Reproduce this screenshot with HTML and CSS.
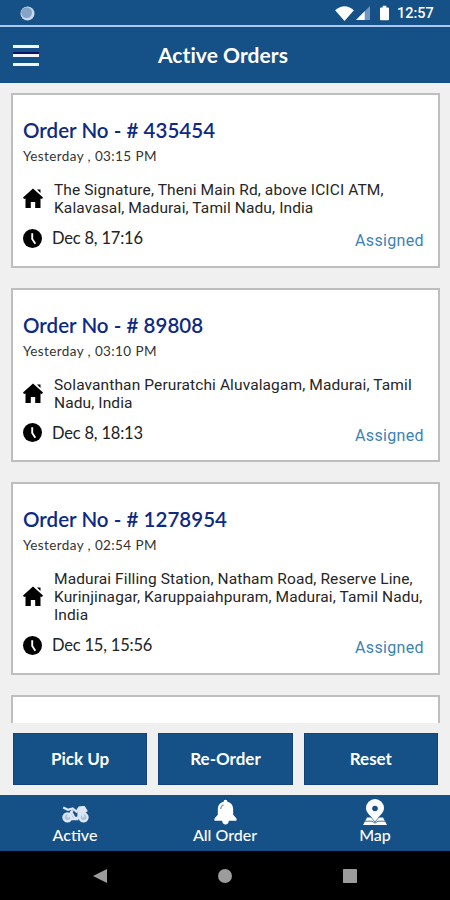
FILE: index.html
```html
<!DOCTYPE html>
<html lang="en">
<head>
<meta charset="utf-8">
<title>Active Orders</title>
<link rel="stylesheet" href="styles.css">
</head>
<body>
<svg class="defs" width="0" height="0">
  <symbol id="home" viewBox="0 0 20 20"><path d="M10 .5 0 9.500 1 11l1.500-.5V20h5.300v-6h4.400v6h5.300v-9.500l1.500.5 1-1.500L10 .5z"/><path d="M14 1.500h3.500V5z"/></symbol>
  <symbol id="clock" viewBox="0 0 20 20"><circle cx="10" cy="10" r="10"/><path d="M9.700 4.500v6l3.300 5" fill="none" stroke="#fff" stroke-width="2"/></symbol>
</svg>
<div class="screen">
  <div class="status">
    <svg class="sync" viewBox="0 0 16 16"><circle cx="8" cy="8" r="7.500" fill="#c9d8e8"/><circle cx="7" cy="7" r="5.800" fill="#86a5c6"/></svg>
    <svg class="wifi" viewBox="0 0 20 16"><path d="M0 4.500Q10-4 20 4.500L10 16z" fill="#fff"/></svg>
    <svg class="signal" viewBox="0 0 15 15"><path d="M15 0v15H0z" fill="#6f97bd"/><path d="M9.300 5.700V15H0z" fill="#fff"/></svg>
    <svg class="battery" viewBox="0 0 10 16"><path d="M3 0h4v2h2q1 0 1 1v12q0 1-1 1H1q-1 0-1-1V3q0-1 1-1h2z" fill="#fff"/></svg>
    <span class="time">12:57</span>
  </div>
  <header class="header">
    <div class="menu"><i></i><i></i><i></i></div>
    <h1>Active Orders</h1>
  </header>
  <main class="list">
    <article class="card">
      <h2>Order No - # 435454</h2>
      <p class="when">Yesterday , 03:15 PM</p>
      <div class="place"><svg class="home"><use href="#home"/></svg><p>The Signature, Theni Main Rd, above ICICI ATM,<br>Kalavasal, Madurai, Tamil Nadu, India</p></div>
      <div class="due"><svg class="clock"><use href="#clock"/></svg><span class="date">Dec 8, 17:16</span><span class="state">Assigned</span></div>
    </article>
    <article class="card">
      <h2>Order No - # 89808</h2>
      <p class="when">Yesterday , 03:10 PM</p>
      <div class="place"><svg class="home"><use href="#home"/></svg><p>Solavanthan Peruratchi Aluvalagam, Madurai, Tamil<br>Nadu, India</p></div>
      <div class="due"><svg class="clock"><use href="#clock"/></svg><span class="date">Dec 8, 18:13</span><span class="state">Assigned</span></div>
    </article>
    <article class="card">
      <h2>Order No - # 1278954</h2>
      <p class="when">Yesterday , 02:54 PM</p>
      <div class="place"><svg class="home"><use href="#home"/></svg><p>Madurai Filling Station, Natham Road, Reserve Line,<br>Kurinjinagar, Karuppaiahpuram, Madurai, Tamil Nadu,<br>India</p></div>
      <div class="due"><svg class="clock"><use href="#clock"/></svg><span class="date">Dec 15, 15:56</span><span class="state">Assigned</span></div>
    </article>
    <article class="card next"></article>
  </main>
  <div class="actions"><button>Pick Up</button><button>Re-Order</button><button>Reset</button></div>
  <nav class="tabs">
    <a><svg class="bike" viewBox="0 0 28 18"><g fill="#a9bfdc" stroke="#dce6f5"><circle cx="5.500" cy="12" r="4.200" stroke-width="2.600"/><circle cx="22.500" cy="12" r="4.200" stroke-width="2.600"/></g><path d="M1 1.500 6 4l5-1.500 4 3.500 3-4.500 5-.5 2.500 4-3 2.500M9 5l4 7.500h4L20 5M11 4.500 5.500 12M20 5l2.500 7M7 8l4 6h6" fill="none" stroke="#dce6f5" stroke-width="2.300"/><path d="m16 4 3-3 4.500.2 2 4-4.500 2-3 6-3 .8 1-3z" fill="#dce6f5"/></svg><span>Active</span></a>
    <a><svg class="bell" viewBox="0 0 24 26"><path d="M10 2.300a2 2 0 0 1 4 0c4 1 6 4 6 8v5.500l3.500 4V22H.500v-2.200l3.500-4v-5.500c0-4 2-7 6-8zM8.500 22h7q-.5 4-3.500 4t-3.500-4z" fill="#fff"/><path d="M7 10q.3-3.500 3-4.500" fill="none" stroke="#6f97bd" stroke-width="1.200"/></svg><span>All Order</span></a>
    <a><svg class="pin" viewBox="0 0 24 26"><path d="M4 18.500h16l4 7.500H0z" fill="#fff"/><path d="M2 22.200h7l3 2 3-2h7M7.500 17.500 12 23l4.500-5.500" fill="none" stroke="#155087" stroke-width=".8"/><path d="M12 22C8 17 3 14 3 9a9 9 0 0 1 18 0c0 5-5 8-9 13z" fill="#fff"/><circle cx="12" cy="9.500" r="2.800" fill="#155087"/></svg><span>Map</span></a>
  </nav>
  <div class="system">
    <svg viewBox="0 0 14 14"><path d="M14 0v14L0 7z"/></svg>
    <svg viewBox="0 0 14 14"><circle cx="7" cy="7" r="7"/></svg>
    <svg viewBox="0 0 14 14"><rect width="14" height="14" rx=".7"/></svg>
  </div>
</div>
</body>
</html>
```
FILE: styles.css
```css
* { box-sizing: border-box; margin: 0; padding: 0; }
body { background: #f0f0f1; font-family: Lato, "Liberation Sans", sans-serif; }
.defs { display: block; }
.screen { width: 450px; height: 900px; display: flex; flex-direction: column; overflow: hidden; }
svg { display: block; flex: none; }
.status { height: 27px; background: #155087; border-bottom: 2px solid #a9c9f2; display: flex; align-items: center; padding: 1px 15px 0 20px; }
.sync { width: 15px; height: 15px; margin-right: auto; }
.wifi { width: 19px; height: 15px; }
.signal { width: 14px; height: 14px; margin-left: 2px; }
.battery { width: 9px; height: 16px; margin: 0 8px 0 10px; }
.time { font: 500 14.500px Roboto, sans-serif; color: #fff; width: 38px; white-space: nowrap; }
.header { height: 56px; background: #155087; display: grid; grid-template-columns: 39px 1fr 39px; align-items: center; }
.menu { width: 39px; padding-left: 13px; display: flex; flex-direction: column; gap: 6px; }
.menu i { display: block; width: 26px; height: 3px; background: #f2f6ff; }
.menu i:nth-child(2) { box-shadow: 0 -2px #10106b; }
h1 { color: #fff; text-align: center; font-size: 21px; font-weight: 700; line-height: 26px; padding-right: 4px; letter-spacing: .07px; }
.list { height: 640px; padding: 10px 10px 0 11px; display: flex; flex-direction: column; gap: 20px; overflow: hidden; }
.card { flex: none; background: #fff; border: 2px solid #bdbebf; height: 174.600px; padding: 22px 14px 0 10px; }
.card:nth-child(3) { height: 193px; }
.card.next { height: 60px; }
h2 { color: #0e2a83; font-size: 20.500px; font-weight: 600; line-height: 26px; letter-spacing: .03px; white-space: nowrap; }
.when { font-size: 13.500px; line-height: 18px; margin-top: 4px; color: #333; letter-spacing: .39px; white-space: nowrap; }
.place { display: flex; align-items: center; margin-top: 16px; }
.home { width: 20px; height: 20px; margin: 0 11px 2px 0; }
.place p { font: 400 15.500px/18px Roboto, sans-serif; color: #262626; letter-spacing: .11px; white-space: nowrap; }
.due { display: flex; align-items: center; height: 20px; margin-top: 11px; }
.clock { width: 19px; height: 19px; }
.date { font-size: 16.500px; color: #222; margin-left: 10px; letter-spacing: -.2px; }
.state { font: 400 16px/20px Roboto, sans-serif; color: #3b82b8; margin-left: auto; padding-top: 6px; letter-spacing: .35px; }
.actions { display: grid; grid-template-columns: repeat(3, 1fr); gap: 11px; padding: 10px 12px 10px 13px; height: 72px; }
button { border: 1px solid #12437f; background: #155087; color: #fff; font: 700 17px Lato, sans-serif; padding-bottom: 2px; }
.tabs { height: 56px; background: #155087; display: grid; grid-template-columns: repeat(3, 1fr); }
.tabs a { display: flex; flex-direction: column; align-items: center; justify-content: flex-end; color: #fff; padding-bottom: 6px; }
.tabs span { font-size: 16px; line-height: 20px; font-weight: 500; }
.bike { width: 27px; height: 17px; margin-bottom: 2px; }
.bell { width: 23px; height: 26px; }
.pin { width: 24px; height: 26px; }
.system { flex: 1; background: #000; display: flex; justify-content: center; align-items: center; gap: 111px; }
.system svg { width: 14px; height: 14px; fill: #9c9c9c; }
```
